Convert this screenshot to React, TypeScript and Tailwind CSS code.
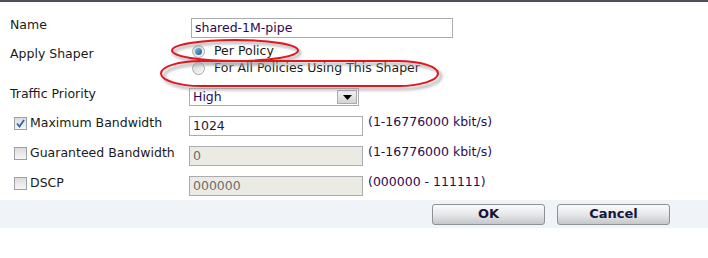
import React from "react";

const font = { fontFamily: '"DejaVu Sans", Verdana, sans-serif' };

function Checkbox({ checked }: { checked?: boolean }) {
  return (
    <div className="w-[13px] h-[13px] border border-[#9aa1a8] bg-gradient-to-b from-[#dcdcdc] to-[#f7f7f7] flex items-center justify-center shrink-0">
      {checked && (
        <svg width="9" height="9" viewBox="0 0 9 9">
          <path d="M1 4.5 L3.5 7.5 L8 1" stroke="#3a5fb8" strokeWidth="1.8" fill="none" />
        </svg>
      )}
    </div>
  );
}

function Radio({ checked }: { checked?: boolean }) {
  return (
    <div className="w-[13px] h-[13px] rounded-full border border-[#a8acb0] bg-gradient-to-br from-[#d6d6d6] to-[#fafafa] flex items-center justify-center shrink-0">
      {checked && (
        <div className="w-[7px] h-[7px] rounded-full bg-gradient-to-br from-[#7ac0ea] to-[#1d5a8c]" />
      )}
    </div>
  );
}

function Btn({ label }: { label: string }) {
  return (
    <div className="w-[113px] h-[21px] rounded-[3px] border border-[#8d9195] bg-gradient-to-b from-[#fbfbfb] via-[#e6e7e8] to-[#c4c8cb] flex items-center justify-center text-[13px] font-bold text-[#15163a]">
      {label}
    </div>
  );
}

export default function App() {
  return (
    <div className="relative w-[708px] h-[258px] bg-white text-[12.5px] text-[#1a1a1a]" style={font}>
      <div className="h-[2px] bg-[#4b4f5c]" />
      <div className="pl-[10px] pt-[15px]">
        {/* Name */}
        <div className="flex h-[26px]">
          <div className="w-[181px] leading-[15px]">Name</div>
          <div className="mt-[1px] w-[262px] h-[20px] border border-[#a9adb1] flex items-center px-[3px] text-[#2a0a55]">
            shared-1M-pipe
          </div>
        </div>
        {/* Apply Shaper */}
        <div className="flex h-[37px]">
          <div className="w-[182px] pt-[3px] leading-[15px]">Apply Shaper</div>
          <div className="flex flex-col">
            <div className="flex items-center h-[17px] gap-[9px]">
              <Radio checked />
              <span>Per Policy</span>
            </div>
            <div className="flex items-center h-[17px] gap-[9px]">
              <Radio />
              <span>For All Policies Using This Shaper</span>
            </div>
          </div>
        </div>
        {/* Traffic Priority */}
        <div className="flex h-[30px]">
          <div className="w-[179px] pt-[6px] leading-[15px]">Traffic Priority</div>
          <div className="mt-[8px] w-[170px] h-[18px] border border-[#a9adb1] flex items-center justify-between pl-[3px] pr-[1px] text-[#2a0a55]">
            <span>High</span>
            <div className="w-[20px] h-[14px] border border-[#a9adb1] bg-gradient-to-b from-[#f4f4f4] to-[#d4d4d4] flex items-center justify-center">
              <svg width="9" height="5" viewBox="0 0 9 5">
                <path d="M0 0 H9 L4.5 5 Z" fill="#000" />
              </svg>
            </div>
          </div>
        </div>
        {/* Rows */}
        {[
          { label: "Maximum Bandwidth", value: "1024", hint: "(1-16776000 kbit/s)", checked: true, disabled: false },
          { label: "Guaranteed Bandwidth", value: "0", hint: "(1-16776000 kbit/s)", checked: false, disabled: true },
          { label: "DSCP", value: "000000", hint: "(000000 - 111111)", checked: false, disabled: true },
        ].map((r) => (
          <div key={r.label} className="flex h-[30px]">
            <div className="w-[179px] flex items-start gap-[3px] pl-[4px] pt-[7px]">
              <Checkbox checked={r.checked} />
              <span className="leading-[13px] -mt-[1px] whitespace-nowrap">{r.label}</span>
            </div>
            <div
              className={
                "mt-[6px] w-[174px] h-[20px] border border-[#a9adb1] flex items-center px-[3px] " +
                (r.disabled ? "bg-[#ebebe4] text-[#6d6d6d]" : "bg-white text-[#1a1a3a]")
              }
            >
              {r.value}
            </div>
            <div className="ml-[5px] pt-[4px] text-[#2a0a55] leading-[15px]">{r.hint}</div>
          </div>
        ))}
      </div>
      {/* Footer */}
      <div className="h-[28px] bg-[#f0f3f7] flex items-center pl-[432px] gap-[12px]">
        <Btn label="OK" />
        <Btn label="Cancel" />
      </div>
      {/* annotations */}
      <svg className="absolute left-0 top-0 pointer-events-none" width="708" height="258">
        <defs>
          <filter id="blur" x="-10%" y="-50%" width="120%" height="200%">
            <feGaussianBlur stdDeviation="1.5" />
          </filter>
        </defs>
        <ellipse cx="237" cy="53" rx="63" ry="10.5" fill="none" stroke="#9a9a9a" strokeWidth="2.5" filter="url(#blur)" opacity="0.8" />
        <rect x="164" y="64" width="277" height="25" rx="40" ry="12.5" fill="none" stroke="#9a9a9a" strokeWidth="2.5" filter="url(#blur)" opacity="0.8" />
        <ellipse cx="235" cy="50.5" rx="63" ry="10.5" fill="none" stroke="#e2141c" strokeWidth="2" />
        <rect x="161" y="61" width="277" height="25" rx="40" ry="12.5" fill="none" stroke="#e2141c" strokeWidth="2" />
      </svg>
    </div>
  );
}
